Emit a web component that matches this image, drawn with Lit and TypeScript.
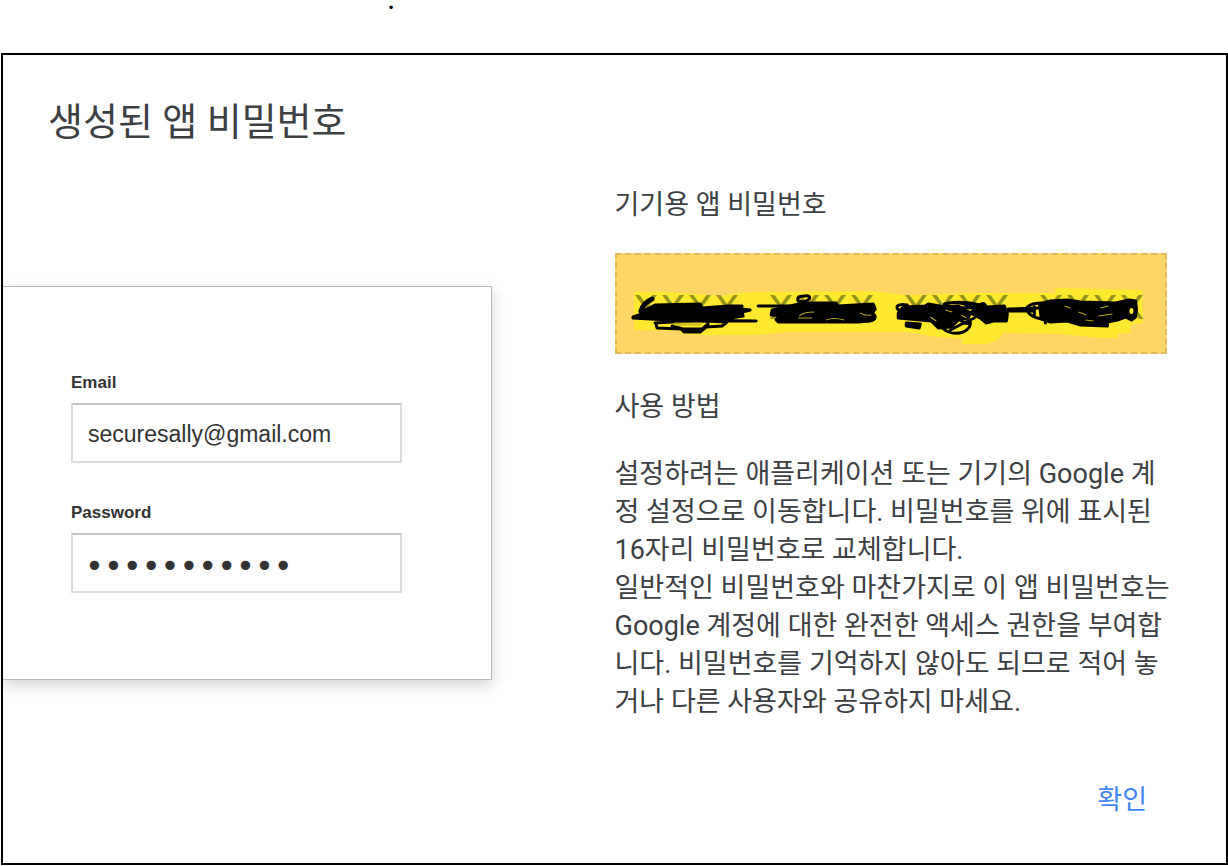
import { LitElement, html, css } from "lit";
import { customElement, state } from "lit/decorators.js";

/** Highlighter band and pen strokes that hide the generated password. */
@customElement("password-redaction")
class PasswordRedaction extends LitElement {
  static styles = css`
    :host {
      display: block;
      position: relative;
      box-sizing: border-box;
      border: 2px dashed #e0bb5c;
      background: #ffd567;
      padding: 29px 16px 21px;
      overflow: hidden;
    }
    .art {
      position: absolute;
      inset: -2px;
      width: calc(100% + 4px);
      height: calc(100% + 4px);
    }
    .code {
      position: relative;
      display: block;
      font: 45px/47px "Liberation Mono", monospace;
      color: #94921a;
      white-space: nowrap;
    }
    .ink {
      fill: #000;
      stroke: #000;
      stroke-width: 3;
      stroke-linejoin: round;
      stroke-linecap: round;
    }
    .line {
      fill: none;
    }
    .thick {
      stroke-width: 5;
    }
    .marker {
      fill: #ffe92e;
    }
    .gap {
      fill: none;
      stroke: #b5a51f;
      stroke-width: 1;
    }
  `;

  render() {
    return html`
      <svg class="art" viewBox="615 253 552 101" preserveAspectRatio="none" aria-hidden="true">
        <path
          class="marker"
          d="M634 292H662Q700 294 720 296Q735 293 752 292L870 291L905 295Q940 294 965 293L1055 293V288L1142 290V323L1130 325V333L1117 334V338H1100L1060 334L1002 333Q1001 341 985 344H962V339L930 336Q905 331 890 332H790L755 335H695L680 334V331L634 330Z"
        />
      </svg>
      <span class="code">xxxx xxxx xxxx xxxx</span>
      <svg class="art" viewBox="615 253 552 101" preserveAspectRatio="none" aria-hidden="true">
        <g class="ink">
          <path d="M641 312L655 305L700 304L702 308L728 306L742 306L741 309L750 310L742 312L743 316L727 318L733 320L700 320L660 319L655 317L633 317L648 312Z" />
          <path class="line thick" d="M652 299Q643 303 641 311" />
          <path class="line" d="M633 318L668 320L756 321M655 323L672 322L704 321L727 322L722 326L706 327L700 332H684L681 329L657 328L656 324M672 326L683 329H702L708 324" />
          <path d="M772 310L790 306L803 303L836 303L838 306L855 305L873 304L875 309L872 313L874 319L868 321L858 322H778L776 319L782 316L771 315Z" />
          <path class="line" d="M758 306L790 306M798 301Q796 296 804 296Q811 295 809 299Q805 303 798 301M776 320Q778 317 784 318" />
          <ellipse class="line" cx="868" cy="317" rx="7" ry="4" />
          <path d="M898 313L903 307L925 306L928 304L945 307L958 306L970 313L968 318L958 320L951 327L938 328L931 321L920 320L898 318Z" />
          <path d="M906 323L920 324L919 328L906 326Z" />
          <path class="line" d="M900 311C893 307 898 303 907 305M944 304Q960 300 980 305Q965 310 946 306M948 303Q963 301 974 309M942 328Q951 336 963 332Q971 328 970 322Q967 326 960 320M950 330Q961 324 974 318" />
          <path d="M978 307Q983 300 986 307L1004 306L1007 314L1006 321L993 321L986 323L980 318L970 313Z" />
          <path class="line" d="M1008 311H1032M1008 309L1040 308M1027 307Q1031 303 1042 303M1027 308Q1026 316 1042 319M1034 307L1034 315M1045 320V323" />
          <path d="M1039 304L1050 301L1067 300L1080 302L1115 303L1129 300L1135 301L1136 309L1135 317L1131 320L1125 317L1117 320L1107 322V326L1080 325L1067 321L1050 322L1041 319Z" />
        </g>
        <path class="gap" d="M674 323H702M675 325H701M799 316Q803 312 814 312M826 320Q833 317 844 320M860 313Q865 316 871 315M798 318H812M930 317L936 321M1064 306L1070 308M1078 312L1086 315M1100 308L1108 306M1098 316L1112 314M1085 320L1093 321M945 310L952 312M961 315L966 318" />
        <ellipse class="marker" cx="1131" cy="311" rx="2" ry="3" />
      </svg>
    `;
  }
}

@customElement("app-root")
class AppRoot extends LitElement {
  @state() private email = "securesally@gmail.com";
  @state() private password = "placeholder";

  static styles = css`
    :host {
      display: flex;
      flex-direction: column;
      box-sizing: border-box;
      min-height: 100vh;
      padding: 0 0 1px 1px;
      background: #fff;
      color: #3c4043;
      font-family: Roboto, "Noto Sans CJK KR", sans-serif;
    }
    .note {
      height: 53px;
      padding-left: 388px;
      box-sizing: border-box;
      color: #000;
      font: 12px/16px "Liberation Sans", sans-serif;
    }
    .dialog {
      flex: 1;
      display: flex;
      flex-direction: column;
      box-sizing: border-box;
      border: 2px solid #000;
    }
    .title {
      margin: 0;
      padding: 39px 45px 0;
      font-size: 38px;
      line-height: 56px;
      font-weight: 400;
    }
    .columns {
      display: grid;
      grid-template-columns: 1fr 1fr;
      padding-top: 36px;
    }
    .card {
      box-sizing: border-box;
      width: 80%;
      height: 394px;
      margin-top: 100px;
      padding: 86px 89px 0 68px;
      border: 1px solid #b8b8b8;
      border-left: 0;
      box-shadow: 0 5px 14px rgba(0, 0, 0, 0.18);
      clip-path: inset(-30px -30px -30px 0);
      display: flex;
      flex-direction: column;
      gap: 40px;
      font-family: "Liberation Sans", Arial, sans-serif;
      color: #333;
    }
    .field {
      display: flex;
      flex-direction: column;
      gap: 10px;
    }
    .label {
      font-size: 17px;
      line-height: 20px;
      font-weight: 700;
    }
    .input {
      box-sizing: border-box;
      width: 100%;
      height: 60px;
      padding: 2px 15px 0;
      border: 2px solid #dcdcdc;
      border-top-color: #c4c4c4;
      border-radius: 1px;
      outline: 0;
      background: #fff;
      color: #333;
      font: 23px "Liberation Sans", Arial, sans-serif;
    }
    .secret {
      padding: 6px 12px 0;
      font: 32px "DejaVu Sans", sans-serif;
    }
    .info {
      padding-right: 46px;
      font-size: 27px;
      line-height: 38px;
    }
    .heading {
      margin: 0;
      font-size: 27px;
      line-height: 38px;
      font-weight: 400;
    }
    .box {
      margin: 29px 13px 34px 0;
    }
    .text {
      margin: 29px 0 0;
    }
    .actions {
      display: flex;
      justify-content: flex-end;
      padding: 60px 79px 0;
    }
    .confirm {
      padding: 0;
      border: 0;
      background: none;
      color: #4285f4;
      font: 400 27px/38px Roboto, "Noto Sans CJK KR", sans-serif;
      cursor: pointer;
    }
  `;

  render() {
    return html`
      <div class="note">•</div>
      <main class="dialog">
        <h1 class="title">생성된 앱 비밀번호</h1>
        <div class="columns">
          <form class="card">
            <div class="field">
              <label class="label" for="email">Email</label>
              <input class="input" id="email" type="email" .value=${this.email} />
            </div>
            <div class="field">
              <label class="label" for="password">Password</label>
              <input class="input secret" id="password" type="password" .value=${this.password} />
            </div>
          </form>
          <section class="info">
            <h2 class="heading">기기용 앱 비밀번호</h2>
            <password-redaction class="box"></password-redaction>
            <h2 class="heading">사용 방법</h2>
            <p class="text">
              설정하려는 애플리케이션 또는 기기의 Google 계정 설정으로 이동합니다. 비밀번호를 위에 표시된
              16자리 비밀번호로 교체합니다.<br />일반적인 비밀번호와 마찬가지로 이 앱 비밀번호는 Google
              계정에 대한 완전한 액세스 권한을 부여합니다. 비밀번호를 기억하지 않아도 되므로 적어
              놓거나 다른 사용자와 공유하지 마세요.
            </p>
          </section>
        </div>
        <div class="actions">
          <button class="confirm" type="button">확인</button>
        </div>
      </main>
    `;
  }
}
